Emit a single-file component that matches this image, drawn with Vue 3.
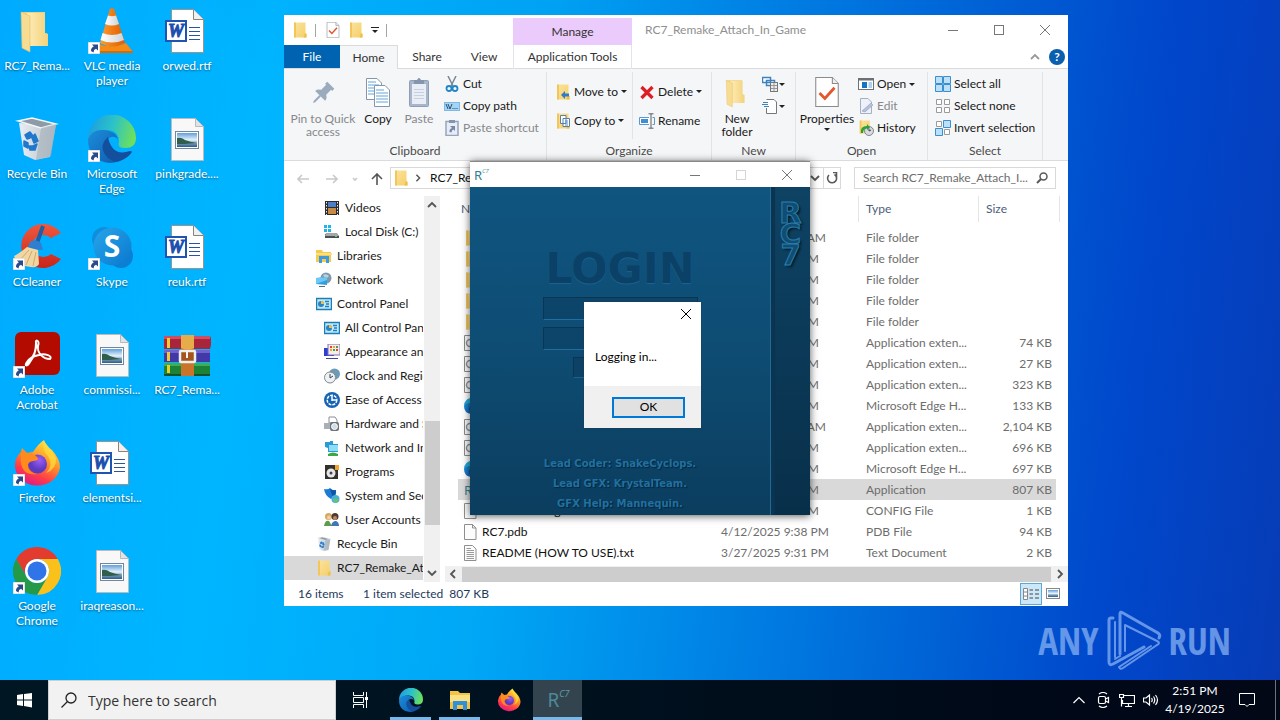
<script setup>
const shortcuts = [
  { label: 'RC7_Rema...', icon: 'd-folder' },
  { label: 'Recycle Bin', icon: 'd-bin' },
  { label: 'CCleaner', icon: 'd-ccleaner', link: true },
  { label: 'Adobe Acrobat', icon: 'd-acrobat', link: true },
  { label: 'Firefox', icon: 'd-firefox', link: true },
  { label: 'Google Chrome', icon: 'd-chrome', link: true },
  { label: 'VLC media player', icon: 'd-vlc', link: true },
  { label: 'Microsoft Edge', icon: 'd-edge', link: true },
  { label: 'Skype', icon: 'd-skype', link: true, letter: 'S' },
  { label: 'commissi...', icon: 'd-image' },
  { label: 'elementsi...', icon: 'd-word', letter: 'W' },
  { label: 'iraqreason...', icon: 'd-image' },
  { label: 'orwed.rtf', icon: 'd-word', letter: 'W' },
  { label: 'pinkgrade....', icon: 'd-image' },
  { label: 'reuk.rtf', icon: 'd-word', letter: 'W' },
  { label: 'RC7_Rema...', icon: 'd-rar' },
]

const tree = [
  { label: 'Videos', icon: 'n-video', deep: true },
  { label: 'Local Disk (C:)', icon: 'n-disk', deep: true },
  { label: 'Libraries', icon: 'n-lib' },
  { label: 'Network', icon: 'n-net' },
  { label: 'Control Panel', icon: 'n-panel' },
  { label: 'All Control Panel Items', icon: 'n-panel', deep: true },
  { label: 'Appearance and Personalization', icon: 'n-look', deep: true },
  { label: 'Clock and Region', icon: 'n-clock', deep: true },
  { label: 'Ease of Access', icon: 'n-ease', deep: true },
  { label: 'Hardware and Sound', icon: 'n-hard', deep: true },
  { label: 'Network and Internet', icon: 'n-inet', deep: true },
  { label: 'Programs', icon: 'n-prog', deep: true },
  { label: 'System and Security', icon: 'n-sec', deep: true },
  { label: 'User Accounts', icon: 'n-users', deep: true },
  { label: 'Recycle Bin', icon: 'd-bin' },
  { label: 'RC7_Remake_Attach_In_Game', icon: 'folder', current: true },
]

const dll = 'Application exten...'
const edge = 'Microsoft Edge H...'
const files = [
  { icon: 'folder', half: 'AM', long: true, type: 'File folder', size: '' },
  { icon: 'folder', half: 'PM', type: 'File folder', size: '' },
  { icon: 'folder', half: 'PM', type: 'File folder', size: '' },
  { icon: 'folder', half: 'PM', type: 'File folder', size: '' },
  { icon: 'folder', half: 'PM', type: 'File folder', size: '' },
  { icon: 'f-dll', half: 'PM', type: dll, size: '74 KB' },
  { icon: 'f-dll', half: 'PM', type: dll, size: '27 KB' },
  { icon: 'f-dll', half: 'PM', type: dll, size: '323 KB' },
  { icon: 'd-edge', half: 'PM', type: edge, size: '133 KB' },
  { icon: 'f-dll', half: 'AM', long: true, type: dll, size: '2,104 KB' },
  { icon: 'f-dll', half: 'PM', type: dll, size: '696 KB' },
  { icon: 'd-edge', half: 'PM', type: edge, size: '697 KB' },
  { icon: 'rc7', half: 'PM', type: 'Application', size: '807 KB', selected: true },
  { icon: 'f-page', name: 'RC7.exe.config', half: 'PM', type: 'CONFIG File', size: '1 KB' },
  { icon: 'f-page', name: 'RC7.pdb', date: '4/12/2025 9:38 PM', type: 'PDB File', size: '94 KB' },
  { icon: 'f-text', name: 'README (HOW TO USE).txt', date: '3/27/2025 9:31 PM', type: 'Text Document', size: '2 KB' },
]
</script>

<template>
  <div class="screen">
    <svg class="sprite" width="0" height="0" aria-hidden="true">
      <defs>
        <linearGradient id="gFold" x1="0" x2="1" y1="0" y2="1"><stop offset="0" stop-color="#fbe3a0" /><stop offset="1" stop-color="#f5cf66" /></linearGradient>
        <linearGradient id="gFold2" x1="0" x2="1"><stop offset="0" stop-color="#ffedb8" /><stop offset="1" stop-color="#f2d27c" /></linearGradient>
        <linearGradient id="gOr" x1="0" x2="1"><stop offset="0" stop-color="#f8a13a" /><stop offset=".5" stop-color="#f07a12" /><stop offset="1" stop-color="#d95f08" /></linearGradient>
        <linearGradient id="gWh" x1="0" x2="1"><stop offset="0" stop-color="#fff" /><stop offset="1" stop-color="#cfd3d6" /></linearGradient>
        <linearGradient id="gEdgeTop" x1="0" x2="1" y1=".3" y2=".5"><stop offset="0" stop-color="#1b9de2" /><stop offset=".5" stop-color="#2cc2c8" /><stop offset="1" stop-color="#6fe05a" /></linearGradient>
        <linearGradient id="gEdgeMid" x1="0" x2="1" y1="0" y2="1"><stop offset="0" stop-color="#1b8edb" /><stop offset="1" stop-color="#0f5cae" /></linearGradient>
        <linearGradient id="gFf" x1=".8" x2=".3" y1="0" y2="1"><stop offset="0" stop-color="#fff04a" /><stop offset=".4" stop-color="#ff9a26" /><stop offset=".75" stop-color="#ff3b4a" /><stop offset="1" stop-color="#e0188a" /></linearGradient>
        <radialGradient id="gFfC" cx=".6" cy=".3"><stop offset="0" stop-color="#a05cf5" /><stop offset="1" stop-color="#5b3bc0" /></radialGradient>
        <linearGradient id="gSky" x1="0" x2="1" y1="0" y2="1"><stop offset="0" stop-color="#27a6ea" /><stop offset="1" stop-color="#0a78cf" /></linearGradient>
        <linearGradient id="gCc" x1="0" x2="0" y1="0" y2="1"><stop offset="0" stop-color="#f0583c" /><stop offset="1" stop-color="#c9241b" /></linearGradient>
        <linearGradient id="gBin" x1="0" x2="1"><stop offset="0" stop-color="#e9eef2" /><stop offset="1" stop-color="#b4bec7" /></linearGradient>
        <linearGradient id="gPic" x1="0" x2="0" y1="0" y2="1"><stop offset="0" stop-color="#5fa0dc" /><stop offset=".5" stop-color="#e8f2fa" /><stop offset=".7" stop-color="#7fa6c4" /><stop offset="1" stop-color="#2c5a86" /></linearGradient>
      </defs>

      <symbol id="arrow" viewBox="0 0 12 12"><rect width="12" height="12" fill="#fff" stroke="#c8c8c8" /><path d="M4 2.5h6v6L8 6.800Q5.500 7.500 5.500 10.500L3 9Q2.800 5.800 5.800 4.500z" fill="#2a4a8c" /></symbol>

      <symbol id="d-folder" viewBox="0 0 48 48"><path d="M8 5H32V26L35 27V39H14z" fill="#f3d17b" /><path d="M14 6H32V26L35 27V39H16z" fill="url(#gFold2)" /><path d="M8 5L17 9V45L9 41z" fill="#f7dc94" stroke="#e3bd5f" stroke-width=".6" /></symbol>
      <symbol id="d-bin" viewBox="0 0 48 48"><path d="M6 8L43 10L37 42L22 45L11 40z" fill="url(#gBin)" /><path d="M5 6L19 3L43 9L28 13z" fill="#8e9ba6" stroke="#f4f7f9" stroke-width="1.500" /><path d="M28 13L43 9L38 41L23 45z" fill="#a5b0ba" opacity=".6" /><path d="M12 20L17 17L20 21L17 23L14 24zM22 19L25 26L21 28L19 23zM11 26L15 28V33L11 31zM16 31H20L24 29L22 35H17z" fill="#1f78cc" stroke="#1f78cc" stroke-width="1.500" stroke-linejoin="round" /></symbol>
      <symbol id="d-ccleaner" viewBox="0 0 48 48"><path d="M48 10A22 22 0 1 0 48 36L38 31A11 11 0 1 1 38 15z" fill="url(#gCc)" /><path d="M30 3L24 20" stroke="#1f5fa6" stroke-width="4" /><path d="M17 19Q22 15 28 20L30 27 14 26z" fill="#2f7fd0" /><path d="M14 24Q4 32 1 33Q4 42 12 43Q24 46 26 41L25 27z" fill="#f1d6a4" /><path d="M6 38L16 27M13 42L19 28M20 43L23 29" stroke="#d2a867" /></symbol>
      <symbol id="d-acrobat" viewBox="0 0 48 48"><rect x="2" y="1" width="45" height="43" rx="6" fill="#b30b00" /><path d="M14 33C20 28 24 18 23 12C22 8 27 9 25 15C24 22 30 28 37 28C40 25 32 22 26 24C20 25 16 28 14 31C11 35 14 36 17 31C21 26 23 18 23 12" fill="none" stroke="#fff" stroke-width="2" stroke-linejoin="round" /></symbol>
      <symbol id="d-firefox" viewBox="0 0 48 48"><path d="M31 1Q33 7 39 11Q47 20 47 28A22.500 20 0 1 1 2 25Q3 17 8 13L9 9L14 14L20 13Q25 5 31 1z" fill="url(#gFf)" /><circle cx="24.500" cy="25" r="9.500" fill="url(#gFfC)" /><path d="M9 10L14 14Q19 13 24 18Q28 21 20 22Q14 23 15 28Q17 34 24 35Q10 37 8 24Q7 16 9 10z" fill="#ff8a1e" /><path d="M31 2Q29 12 35 17Q41 27 33 34Q44 30 43 19Q39 12 31 2z" fill="#ffe03d" opacity=".7" /></symbol>
      <symbol id="d-chrome" viewBox="0 0 48 48"><path d="M24 12H44.800A24 24 0 0 0 3.200 12L13.600 30A12 12 0 0 1 24 12z" fill="#e33b2e" /><path d="M44.800 12A24 24 0 0 1 24 48L34.400 30A12 12 0 0 0 24 12z" fill="#fbc11b" /><path d="M3.200 12A24 24 0 0 0 24 48L34.400 30A12 12 0 0 1 13.600 30z" fill="#249a48" /><circle cx="24" cy="24" r="12" fill="#fff" /><circle cx="24" cy="24" r="9.500" fill="#2f74e8" /></symbol>
      <symbol id="d-vlc" viewBox="0 0 48 48"><path d="M11 37Q24 42 38 36L45 45H6z" fill="#f58a14" /><path d="M6 44H45V46H6z" fill="#d86a06" /><path d="M22 1.500H26L37 36Q24 43 12 36z" fill="url(#gOr)" /><path d="M20 8.500Q24 10 28 8.500L31 17Q24 20 17 17z" fill="url(#gWh)" /><path d="M14.500 26Q24 30 33.500 26L36 33Q24 38 12.500 33z" fill="url(#gWh)" /></symbol>
      <symbol id="d-edge" viewBox="0 0 48 48"><path d="M0 24A24 24 0 0 1 48 23Q48 33 37 33Q29 33 31 27Q31 15 19 15Q6 15 0 24z" fill="url(#gEdgeTop)" /><path d="M0 24Q4 14 16 15Q29 16 30 25Q28 21 23 22Q16 24 17 34Q20 45 31 46Q27 48 22 48Q0 46 0 24z" fill="url(#gEdgeMid)" /><path d="M20 22Q9 32 20 43Q26 48 32 46Q40 43 44 37Q44 36 42 36Q24 42 20 22z" fill="#134f9c" /></symbol>
      <symbol id="d-skype" viewBox="0 0 48 48"><circle cx="16" cy="16" r="12" fill="#0f8ede" /><circle cx="33" cy="33" r="12" fill="#0b7fd4" /><circle cx="24.500" cy="23.500" r="19" fill="url(#gSky)" /></symbol>
      <symbol id="d-word" viewBox="0 0 48 48"><path d="M8.500 2.500H30.500L40.500 12.500V45.500H8.500z" fill="#fff" stroke="#9b938c" /><path d="M30.500 2.500V12.500H40.500" fill="#f0f0f0" stroke="#8a827b" /><path d="M26 20.500H37M26 24.500H37M26 28.500H37M26 32.500H37" stroke="#2b579a" /><rect x="3" y="14" width="20" height="20" fill="#fff" stroke="#1f55b0" stroke-width="2" /></symbol>
      <symbol id="d-image" viewBox="0 0 48 48"><path d="M8.500 3.500H32.500L40.500 11.500V45.500H8.500z" fill="#f8f8f8" stroke="#bdbab7" /><path d="M32.500 3.500V11.500H40.500z" fill="#e0e4e8" stroke="#b9b9b9" /><rect x="12.500" y="16.500" width="23" height="17" fill="#fff" stroke="#6f8799" /><rect x="14" y="18" width="20" height="14" fill="url(#gPic)" /><path d="M14 23Q18 22 22 25Q27 27 34 28L22 29L14 29z" fill="#2f5f4c" /></symbol>
      <symbol id="d-rar" viewBox="0 0 48 48"><path d="M1 5H47L49 10L47 18H1z" fill="#a8253c" /><path d="M1 5H47V8H1z" fill="#d04d62" /><path d="M1 19H47V31H1z" fill="#4238a8" /><path d="M1 19H47V22H1z" fill="#6d64cf" /><path d="M1 32H47V43H1z" fill="#1b8236" /><path d="M1 32H47V35H1z" fill="#41ad52" /><path d="M1 43H47V45H1z" fill="#12512a" /><path d="M4 7H7V17H4zM4 21H7V30H4zM4 34H7V42H4z" fill="#f1cb2e" /><path d="M18 4H31V45H18z" fill="#c9742a" /><path d="M18 4H31V17Q25 20 18 17z" fill="#e8ab4a" /><rect x="17" y="20" width="15" height="11" rx="1" fill="#a5541c" stroke="#eceff2" stroke-width="2.500" /><path d="M24 20V27" stroke="#f4f4f4" stroke-width="2" /></symbol>

      <symbol id="folder" viewBox="0 0 16 16"><path d="M2 .5H13.500V11L14.500 12V15.500H2z" fill="url(#gFold)" /><path d="M2 .5H4V15.500H2z" fill="#f1c75c" /><path d="M13 11L14.500 12V15.500H11.500z" fill="#eebf4a" /></symbol>
      <symbol id="f-dll" viewBox="0 0 16 16"><path d="M.5.5H12L15.500 4V15.500H.5z" fill="#fafafa" stroke="#8a8a8a" /><circle cx="6" cy="8" r="3.500" fill="none" stroke="#8c9298" stroke-width="1.500" /><circle cx="10" cy="11" r="2" fill="#b6bec6" /></symbol>
      <symbol id="f-page" viewBox="0 0 16 16"><path d="M.5.5H8.500L12 4V15.500H.5z" fill="#fcfcfc" stroke="#8f8f8f" /><path d="M8.500.5V4H12" fill="none" stroke="#8f8f8f" /></symbol>
      <symbol id="f-text" viewBox="0 0 16 16"><path d="M.5.5H8.500L12 4V15.500H.5z" fill="#fcfcfc" stroke="#8f8f8f" /><path d="M2.500 5.500H10M2.500 7.500H10M2.500 9.500H10M2.500 11.500H10M2.500 13.500H10M2.500 3.500H7" stroke="#9a9a9a" /></symbol>
      <symbol id="check-doc" viewBox="0 0 22 28"><path d="M.5.5H16L21.500 6V27.500H.5z" fill="#fff" stroke="#8b8b8b" /><path d="M16 .5V6H21.500" fill="#eee" stroke="#8b8b8b" /><path d="M4 15L9 20L18 10" fill="none" stroke="#e1582c" stroke-width="2.600" /></symbol>

      <symbol id="n-video" viewBox="0 0 16 16"><rect x="1" y="1" width="14" height="14" fill="#2b2b30" /><rect x="4" y="2" width="8" height="5" fill="#4d7fc4" /><rect x="4" y="8" width="8" height="6" fill="#c58b45" /><path d="M2.500 2V15M13.500 2V15" stroke="#e8e8e8" stroke-dasharray="1.500 1.500" /></symbol>
      <symbol id="n-disk" viewBox="0 0 16 16"><path d="M0 1H3V4H0zM4 1H7V4H4zM0 5H3V8H0zM4 5H7V8H4z" fill="#23b3e8" /><path d="M1 10H13L15 12V14H1z" fill="#4a4e52" /><path d="M2 9H13L15 12H1z" fill="#a3a8ad" /><path d="M11 12H13V13H11z" fill="#3fe05a" /></symbol>
      <symbol id="n-lib" viewBox="0 0 16 16"><path d="M0 2H6L7 4H15V14H0z" fill="#f6ca4b" /><path d="M0 5H16V7H0z" fill="#fbe08a" /><path d="M3 8H13V15H10V11H6V15H3z" fill="#3c9ae0" /></symbol>
      <symbol id="n-net" viewBox="0 0 16 16"><circle cx="10" cy="6" r="5.500" fill="#7e99ab" /><path d="M7 3Q10 1 13 4L10 7z" fill="#bcd3de" /><path d="M0 6L11 5V13L0 12z" fill="#2f9fe0" /><path d="M0 6L11 5V8L0 12z" fill="#6cc8f5" /><path d="M3 14H9V15H3z" fill="#50707f" /></symbol>
      <symbol id="n-panel" viewBox="0 0 16 16"><rect x=".5" y="2.500" width="15" height="11" fill="#bfe8fb" stroke="#1e7fb8" stroke-width="1.500" /><circle cx="5" cy="8" r="3" fill="#2a83c2" /><path d="M5 8V5A3 3 0 0 1 8 8z" fill="#f3c13a" /><path d="M9 5.500H13M10 8H13M9 10.500H13" stroke="#2282b8" stroke-width="1.500" /></symbol>
      <symbol id="n-look" viewBox="0 0 16 16"><rect x="0" y="4" width="10" height="8" fill="#2b3fd0" /><rect x="4" y="0" width="12" height="11" fill="#f3efe8" stroke="#8d6bb0" /><path d="M6 2H8V4H6zM12 5H14V7H12z" fill="#e0463c" /><path d="M9 2H11V4H9zM6 5H8V7H6z" fill="#f0a52e" /><path d="M12 2H14V4H12zM9 5H11V7H9z" fill="#4aa047" /><path d="M2 14H14V15H2z" fill="#3a4896" /></symbol>
      <symbol id="n-clock" viewBox="0 0 16 16"><circle cx="10.500" cy="6" r="5.500" fill="#6b9bb5" /><circle cx="6" cy="9.500" r="5.500" fill="#eef2f4" stroke="#808a90" /><path d="M6 6V10L9 8" fill="none" stroke="#3c4750" /></symbol>
      <symbol id="n-ease" viewBox="0 0 16 16"><circle cx="8" cy="8" r="8" fill="#1565b4" /><circle cx="8" cy="8" r="4.800" fill="none" stroke="#fff" stroke-width="1.500" stroke-dasharray="3 1" /><path d="M8 4V9M8 8H12" stroke="#fff" stroke-width="1.500" /></symbol>
      <symbol id="n-hard" viewBox="0 0 16 16"><path d="M5 1H11L13 4V7H5z" fill="#fff" stroke="#8a8f94" /><path d="M0 7H14V13H0z" fill="#a9afb4" /><rect x="6" y="6" width="9" height="9" rx="2" fill="#6d7379" /><circle cx="10.500" cy="10.500" r="3" fill="#cfe0ea" stroke="#fff" /></symbol>
      <symbol id="n-inet" viewBox="0 0 16 16"><path d="M1 2H6V1H9V4H14V12H4V8L1 7z" fill="#2a9bd4" /><rect x="5" y="5" width="9" height="6" fill="#8fdcf7" /><path d="M4 14Q9 11 14 14V16H4z" fill="#39a849" /></symbol>
      <symbol id="n-prog" viewBox="0 0 16 16"><rect x="1" y="1" width="13" height="14" fill="#33312e" /><path d="M11 1H15V6H11z" fill="#f0a62a" /><circle cx="7" cy="9" r="4.500" fill="#e6e6e6" /><circle cx="7" cy="9" r="1.500" fill="#444" /></symbol>
      <symbol id="n-sec" viewBox="0 0 16 16"><path d="M0 1Q4 2 6 0Q9 3 12 2Q13 9 7 11Q1 8 0 1z" fill="#1b7bd2" /><path d="M6 1Q9 3 12 2Q12 7 9 10z" fill="#0d56a5" /><circle cx="11.500" cy="11" r="4" fill="#47b0d9" /><path d="M9 12Q12 9 15 12L12 15z" fill="#6fc26c" /></symbol>
      <symbol id="n-users" viewBox="0 0 16 16"><circle cx="4.500" cy="4.500" r="3.500" fill="#d7a95e" /><circle cx="11" cy="4.500" r="3.500" fill="#4e3b2e" /><circle cx="5" cy="5.500" r="2" fill="#f3cfa6" /><circle cx="11" cy="6" r="2" fill="#b98862" /><path d="M0 14Q1 8 5 9L8 14z" fill="#5c9d4b" /><path d="M7 14Q8 9 12 9Q15 10 15 14z" fill="#3d77b5" /></symbol>

      <symbol id="r-pin" viewBox="0 0 32 32"><g transform="rotate(45 16 16)" fill="#9aabbd"><path d="M11 5H21V8H19.500V15Q23 17 23 20H9Q9 17 12.500 15V8H11z" /><path d="M15 20H17V28L16 30L15 28z" /></g></symbol>
      <symbol id="r-copy" viewBox="0 0 32 32"><g fill="#fff" stroke="#8497a9"><path d="M4.500 1.500H15L19.500 6V22.500H4.500z" /><path d="M12.500 8.500H23L27.500 13V29.500H12.500z" /></g><path d="M6 5H14M6 8H17M6 11H12M6 14H12M6 17H12M14 13H22M14 16H26M14 19H26M14 22H26M14 25H26" stroke="#62a5dc" /></symbol>
      <symbol id="r-paste" viewBox="0 0 32 32"><rect x="6.500" y="3.500" width="19" height="26" rx="1" fill="#a9b6ca" stroke="#8e9fba" /><rect x="9" y="7" width="14" height="20" fill="#e9eef6" /><path d="M11 5V3H14Q16 -1 18 3H21V7H11z" fill="#8495ae" /><path d="M11 12.500H21M11 15.500H21M11 18.500H21M11 21.500H21" stroke="#c5d0e2" /></symbol>
      <symbol id="r-cut" viewBox="0 0 16 16"><path d="M4 0L9 10M12 0L7 10" stroke="#7b8792" stroke-width="1.500" /><circle cx="5" cy="12.500" r="2.500" fill="none" stroke="#2185c7" stroke-width="1.800" /><circle cx="11" cy="12.500" r="2.500" fill="none" stroke="#2185c7" stroke-width="1.800" /></symbol>
      <symbol id="r-path" viewBox="0 0 16 16"><rect x=".5" y="4.500" width="15" height="8" fill="#a6d4f5" stroke="#7eb8e4" /><path d="M2 6L4 11M4 6L6 11L8 6" stroke="#234f75" fill="none" /><path d="M8.500 10.500H14" stroke="#234f75" stroke-dasharray="1 1" /></symbol>
      <symbol id="r-short" viewBox="0 0 16 16"><rect x="2" y="1.500" width="12" height="14" fill="#e8edf5" stroke="#95a5bf" stroke-width="1.500" /><path d="M5 0H11V3H5z" fill="#8495ae" /><path d="M6 6H11V11L9.500 9.500Q7.500 10 7.500 12.500L5.500 12Q5 9 8 8z" fill="#7488ab" /></symbol>
      <symbol id="r-move" viewBox="0 0 16 16"><use href="#folder" width="16" height="16" /><path d="M6 11L10 7V9.500H14V12.500H10V15z" fill="#2f7cc4" /></symbol>
      <symbol id="r-copyto" viewBox="0 0 16 16"><use href="#folder" width="16" height="16" /><path d="M5.500 2.500H11V10.500H5.500zM8 5.500H14.500V13.500H8z" fill="#fff" stroke="#5b7fa5" /><path d="M10 8H13M10 10H13M10 12H13" stroke="#4a90cf" /></symbol>
      <symbol id="r-del" viewBox="0 0 16 16"><path d="M2.500 3L13.500 14M13.500 3L2.500 14" stroke="#db1f26" stroke-width="3.200" /></symbol>
      <symbol id="r-ren" viewBox="0 0 16 16"><path d="M10 4.500H.5V11.500H10" fill="#fff" stroke="#5a98cf" /><path d="M2 6H9V10H2z" fill="#3e8fd4" /><path d="M12 1V15M9.500 .800H14.500M9.500 15.200H14.500" stroke="#5c5c5c" /><path d="M13.500 4.500H15.500V11.500H13.500" fill="none" stroke="#5a98cf" /></symbol>
      <symbol id="r-item" viewBox="0 0 16 16"><path d="M.5 1.500H8.500V6.500H.5zM4.500 4.500H12.500V9.500H4.500z" fill="#fff" stroke="#3d83bf" stroke-width="1.500" /><rect x="8.500" y="6.500" width="7" height="9" fill="#eee" stroke="#777" /><path d="M9 9.500H15M9 12.500H15M12 7V15" stroke="#999" /></symbol>
      <symbol id="r-easy" viewBox="0 0 16 16"><path d="M4.500 1.500H12L14.500 4V15.500H4.500V10" fill="#fff" stroke="#777" /><path d="M0 6.500H6M1 4.500H6M2 8.500H7" stroke="#3d83bf" /></symbol>
      <symbol id="r-open" viewBox="0 0 16 16"><rect x=".5" y="2.500" width="15" height="11" fill="#fff" stroke="#6b7177" /><path d="M0 3.500H16" stroke="#6b7177" stroke-width="2" /><rect x="4" y="6" width="5" height="6" fill="#1673c4" /><path d="M10.500 7H14M10.500 9H14M10.500 11H14" stroke="#58a0da" /></symbol>
      <symbol id="r-edit" viewBox="0 0 16 16"><path d="M2.500.5H10L13.500 4V15.500H2.500z" fill="#eef2f8" stroke="#a3b0c6" /><path d="M4 13L13 5L15 7L7 14z" fill="#b4c1d8" stroke="#90a1bf" stroke-width=".6" /></symbol>
      <symbol id="r-hist" viewBox="0 0 16 16"><use href="#folder" width="14" height="14" /><circle cx="11" cy="11" r="4.500" fill="#d6dade" stroke="#80878d" /><path d="M11 8.500V11L13 10" fill="none" stroke="#444" /><path d="M3 13Q2 6 9 6V4L12 7.500L9 10V8.500Q5 8.500 5 13z" fill="#27a23a" /></symbol>
      <symbol id="r-all" viewBox="0 0 16 16"><path d="M.5.5H7.500V7.500H.5zM8.500.5H15.500V7.500H8.500zM.5 8.500H7.500V15.500H.5zM8.500 8.500H15.500V15.500H8.500z" fill="#bde0f8" stroke="#3990cf" /></symbol>
      <symbol id="r-none" viewBox="0 0 16 16"><path d="M1.500 1.500H6.500V6.500H1.500zM9.500 1.500H14.500V6.500H9.500zM1.500 9.500H6.500V14.500H1.500zM9.500 9.500H14.500V14.500H9.500z" fill="#fff" stroke="#9a9a9a" /></symbol>
      <symbol id="r-inv" viewBox="0 0 16 16"><path d="M1.500 1.500H6.500V6.500H1.500zM9.500 9.500H14.500V14.500H9.500z" fill="#fff" stroke="#9a9a9a" /><path d="M8.500.5H15.500V7.500H8.500zM.5 8.500H7.500V15.500H.5z" fill="#bde0f8" stroke="#3990cf" /></symbol>

      <symbol id="w-min" viewBox="0 0 12 12"><path d="M1 6.500H11" stroke="currentColor" /></symbol>
      <symbol id="w-max" viewBox="0 0 12 12"><rect x="1.500" y="1.500" width="9" height="9" fill="none" stroke="currentColor" /></symbol>
      <symbol id="w-close" viewBox="0 0 12 12"><path d="M1 1L11 11M11 1L1 11" stroke="currentColor" fill="none" /></symbol>
      <symbol id="c-up" viewBox="0 0 10 10"><path d="M1 7L5 3L9 7" fill="none" stroke="currentColor" stroke-width="1.800" /></symbol>
      <symbol id="c-down" viewBox="0 0 10 10"><path d="M1 3L5 7L9 3" fill="none" stroke="currentColor" stroke-width="1.800" /></symbol>
      <symbol id="c-left" viewBox="0 0 10 10"><path d="M7 1L3 5L7 9" fill="none" stroke="currentColor" stroke-width="1.800" /></symbol>
      <symbol id="c-right" viewBox="0 0 10 10"><path d="M3 1L7 5L3 9" fill="none" stroke="currentColor" stroke-width="1.800" /></symbol>
    </svg>

    <main class="desktop">
      <ul class="shortcuts">
        <li v-for="(s, i) in shortcuts" :key="i" class="shortcut">
          <span class="pic">
            <svg class="i48"><use :href="'#' + s.icon" /></svg>
            <span v-if="s.letter" class="letter" :class="'letter-' + s.letter">{{ s.letter }}</span>
            <svg v-if="s.link" class="badge"><use href="#arrow" /></svg>
          </span>
          <span class="caption">{{ s.label }}</span>
        </li>
      </ul>

      <div class="watermark" aria-label="ANY RUN">
        <span>ANY</span>
        <svg class="wm-logo" viewBox="0 0 56 62" fill="none" stroke="currentColor" stroke-width="3" stroke-linejoin="round" stroke-linecap="round">
          <path d="M7 8H5Q3 8 3 10V52Q3 56 7 54L38 37M14 44V4Q14 1 17 3L52 23Q55 25 53 28" />
          <path d="M9 12V47M9 49L14 46M19 15L51 31Q55 33 51 35L17 58Q14 60 13 57L45 36M19 41V15" stroke-width="2" />
        </svg>
        <span>RUN</span>
      </div>

      <section class="explorer" aria-label="RC7_Remake_Attach_In_Game">
        <header class="titlebar">
          <div class="quick">
            <svg class="i16"><use href="#folder" /></svg><i class="bar"></i>
            <svg class="i16"><use href="#check-doc" /></svg>
            <svg class="i16"><use href="#folder" /></svg>
            <svg class="qcaret" viewBox="0 0 8 8"><path d="M0 1.500H8" stroke="#222" /><path d="M1 4H7L4 7z" fill="#222" /></svg><i class="bar"></i>
          </div>
          <div class="manage">Manage</div>
          <h1 class="title">RC7_Remake_Attach_In_Game</h1>
          <div class="winbtns">
            <button aria-label="Minimize"><svg class="i12"><use href="#w-min" /></svg></button>
            <button aria-label="Maximize"><svg class="i12"><use href="#w-max" /></svg></button>
            <button aria-label="Close"><svg class="i12"><use href="#w-close" /></svg></button>
          </div>
        </header>

        <nav class="tabs">
          <button class="tab file">File</button>
          <button class="tab home">Home</button>
          <button class="tab">Share</button>
          <button class="tab view-tab">View</button>
          <button class="tab tools">Application Tools</button>
          <span class="tabs-end">
            <svg class="i10"><use href="#c-up" /></svg>
            <button class="help" aria-label="Help">?</button>
          </span>
        </nav>

        <div class="ribbon">
          <div class="group g-clip">
            <div class="tools-row">
              <button class="big dim w-pin"><svg class="i32"><use href="#r-pin" /></svg><span>Pin to Quick<br>access</span></button>
              <button class="big w-copy"><svg class="i32"><use href="#r-copy" /></svg><span>Copy</span></button>
              <button class="big dim w-paste"><svg class="i32"><use href="#r-paste" /></svg><span>Paste</span></button>
              <div class="stack">
                <button class="small"><svg class="i16"><use href="#r-cut" /></svg>Cut</button>
                <button class="small"><svg class="i16"><use href="#r-path" /></svg>Copy path</button>
                <button class="small dim"><svg class="i16"><use href="#r-short" /></svg>Paste shortcut</button>
              </div>
            </div>
            <div class="gname">Clipboard</div>
          </div>
          <div class="group g-org">
            <div class="tools-row">
              <div class="stack loose first">
                <button class="small"><svg class="i16"><use href="#r-move" /></svg>Move to<i class="caret"></i></button>
                <button class="small"><svg class="i16"><use href="#r-copyto" /></svg>Copy to<i class="caret"></i></button>
              </div>
              <div class="stack loose second">
                <button class="small"><svg class="i16"><use href="#r-del" /></svg>Delete<i class="caret"></i></button>
                <button class="small"><svg class="i16"><use href="#r-ren" /></svg>Rename</button>
              </div>
            </div>
            <div class="gname">Organize</div>
          </div>
          <div class="group g-new">
            <div class="tools-row">
              <button class="big w-new"><svg class="i32"><use href="#d-folder" /></svg><span>New<br>folder</span></button>
              <div class="stack">
                <button class="small" aria-label="New item"><svg class="i16"><use href="#r-item" /></svg><i class="caret tight"></i></button>
                <button class="small" aria-label="Easy access"><svg class="i16"><use href="#r-easy" /></svg><i class="caret tight"></i></button>
              </div>
            </div>
            <div class="gname">New</div>
          </div>
          <div class="group g-open">
            <div class="tools-row">
              <button class="big w-prop"><svg class="i32"><use href="#check-doc" x="3" width="26" height="30" /></svg><span>Properties</span><i class="caret"></i></button>
              <div class="stack">
                <button class="small"><svg class="i16"><use href="#r-open" /></svg>Open<i class="caret"></i></button>
                <button class="small dim"><svg class="i16"><use href="#r-edit" /></svg>Edit</button>
                <button class="small"><svg class="i16"><use href="#r-hist" /></svg>History</button>
              </div>
            </div>
            <div class="gname">Open</div>
          </div>
          <div class="group g-sel">
            <div class="tools-row">
              <div class="stack">
                <button class="small"><svg class="i16"><use href="#r-all" /></svg>Select all</button>
                <button class="small"><svg class="i16"><use href="#r-none" /></svg>Select none</button>
                <button class="small"><svg class="i16"><use href="#r-inv" /></svg>Invert selection</button>
              </div>
            </div>
            <div class="gname">Select</div>
          </div>
        </div>

        <div class="address">
          <div class="arrows">
            <svg class="i12 off" viewBox="0 0 12 12"><path d="M12 6H1M5 2L1 6L5 10" /></svg>
            <svg class="i12 off" viewBox="0 0 12 12"><path d="M0 6H11M7 2L11 6L7 10" /></svg>
            <svg class="i6 off" viewBox="0 0 6 6"><path d="M1 2L3 4L5 2" /></svg>
            <svg class="i12 up" viewBox="0 0 12 12"><path d="M6 12V1M1 6L6 1L11 6" /></svg>
          </div>
          <div class="crumbs">
            <svg class="i16"><use href="#folder" /></svg>
            <svg class="i8"><use href="#c-right" /></svg>
            <span class="crumb">RC7_Remake_Attach_In_Game</span>
            <svg class="i10"><use href="#c-down" /></svg>
          </div>
          <button class="refresh" aria-label="Refresh"><svg class="i12" viewBox="0 0 12 12"><path d="M8.500 2.500A4.500 4.500 0 1 1 3 3M7 .5H10.500V5" fill="none" stroke="#5a5a5a" stroke-width="1.600" /></svg></button>
          <div class="search">
            <input type="text" placeholder="Search RC7_Remake_Attach_I..." aria-label="Search folder">
            <svg class="i12" viewBox="0 0 12 12"><circle cx="7.500" cy="4.500" r="3.500" fill="none" stroke="#5a5a5a" stroke-width="1.500" /><path d="M5 7L1 11" stroke="#5a5a5a" stroke-width="2" /></svg>
          </div>
        </div>

        <div class="panes">
          <ul class="tree">
            <li v-for="(n, i) in tree" :key="i" :class="{ deep: n.deep, current: n.current }">
              <svg class="i16"><use :href="'#' + n.icon" /></svg>{{ n.label }}
            </li>
          </ul>
          <div class="vscroll">
            <svg class="i10"><use href="#c-up" /></svg>
            <span class="vthumb"></span>
            <svg class="i10"><use href="#c-down" /></svg>
          </div>
          <div class="listing">
            <table>
              <colgroup><col class="c-name"><col class="c-date"><col class="c-type"><col class="c-size"></colgroup>
              <thead><tr><th>Name</th><th></th><th>Type</th><th>Size</th></tr></thead>
              <tbody>
                <tr v-for="(f, i) in files" :key="i" :class="{ selected: f.selected }">
                  <td>
                    <span class="fname">
                      <span v-if="f.icon === 'rc7'" class="rc7">R<sup>C7</sup></span>
                      <svg v-else class="i16"><use :href="'#' + f.icon" /></svg>{{ f.name }}
                    </span>
                  </td>
                  <td :class="{ tail: f.half, long: f.long }">{{ f.date || f.half }}</td>
                  <td>{{ f.type }}</td>
                  <td>{{ f.size }}</td>
                </tr>
              </tbody>
            </table>
            <div class="hscroll">
              <svg class="i10"><use href="#c-left" /></svg>
              <span class="hthumb"></span>
              <svg class="i10"><use href="#c-right" /></svg>
            </div>
          </div>
        </div>

        <footer class="status">
          <span class="count">16 items</span>
          <span>1 item selected</span>
          <span class="bytes">807 KB</span>
          <button class="view on" aria-label="Details view"><svg viewBox="0 0 16 14"><path d="M.5 1.500H4.500V12.500H.5zM.5 5H4.500M.5 9H4.500" fill="#fff" stroke="#888" /><path d="M6.500 3H10M12 3H16M6.500 7H10M12 7H16M6.500 11H10M12 11H16" stroke="#444" /></svg></button>
          <button class="view" aria-label="Large icons view"><svg viewBox="0 0 16 14"><rect x="1.500" y="1.500" width="13" height="10" fill="#fff" stroke="#888" /><rect x="3" y="3" width="10" height="7" fill="url(#gPic)" /></svg></button>
        </footer>
      </section>

      <section class="login" aria-label="RC7 login">
        <header class="login-bar">
          <span class="rc7">R<sup>C7</sup></span>
          <div class="winbtns">
            <button aria-label="Minimize"><svg class="i12"><use href="#w-min" /></svg></button>
            <button class="faint" aria-label="Maximize" disabled><svg class="i12"><use href="#w-max" /></svg></button>
            <button aria-label="Close"><svg class="i12"><use href="#w-close" /></svg></button>
          </div>
        </header>
        <div class="login-body">
          <form class="form" @submit.prevent>
            <h2>LOGIN</h2>
            <input type="text" aria-label="Username">
            <input type="password" aria-label="Password">
            <button class="go" aria-label="Log in"></button>
            <div class="credits">
              <p>Lead Coder: SnakeCyclops.</p>
              <p>Lead GFX: KrystalTeam.</p>
              <p>GFX Help: Mannequin.</p>
            </div>
          </form>
          <aside class="brand"><span>R</span><span>C</span><span>7</span></aside>
        </div>
      </section>

      <section class="msg" role="dialog" aria-label="Message">
        <button class="msg-close" aria-label="Close"><svg class="i12"><use href="#w-close" /></svg></button>
        <p>Logging in...</p>
        <div class="msg-foot"><button>OK</button></div>
      </section>
    </main>

    <footer class="taskbar">
      <button class="tb" aria-label="Start"><svg class="i16" viewBox="0 0 16 16"><path d="M1 3L7 2V7.500H1zM8 2L16 1V7.500H8zM1 8.500H7V14L1 13zM8 8.500H16V15.500L8 14z" fill="#fff" /></svg></button>
      <label class="tb-search">
        <svg class="i16" viewBox="0 0 16 16"><circle cx="10" cy="6" r="5" fill="none" stroke="#222" stroke-width="1.300" /><path d="M6.500 9.500L.5 15.500" stroke="#222" stroke-width="1.300" /></svg>
        <input type="text" placeholder="Type here to search" aria-label="Type here to search">
      </label>
      <button class="tb task" aria-label="Task view"><svg class="i16" viewBox="0 0 16 16" fill="none" stroke="#fff"><path d="M.5 0V3.500H10.500V0M.5 16V12.500H10.500V16M.5 5.500H10.500V10.500H.5zM13.500 0V16" /><path d="M12 6.500H15" stroke-width="3" /></svg></button>
      <button class="tb app" aria-label="Microsoft Edge"><svg class="i24"><use href="#d-edge" /></svg></button>
      <button class="tb app" aria-label="File Explorer"><svg class="i24" viewBox="0 0 24 24"><path d="M2 3H10L12 5H22V21H2z" fill="#f5c344" /><path d="M2 7H22V14H2z" fill="#fbdf83" /><path d="M5 13H19V22H15V17H9V22H5z" fill="#2f8fdb" /></svg></button>
      <button class="tb" aria-label="Firefox"><svg class="i24"><use href="#d-firefox" /></svg></button>
      <button class="tb app active" aria-label="RC7"><span class="rc7 large">R<sup>C7</sup></span></button>
      <div class="tray">
        <svg class="i16" viewBox="0 0 16 16"><path d="M2.500 11L8 5.500L13.500 11" /></svg>
        <svg class="i16" viewBox="0 0 16 16"><rect x="3.500" y="4.500" width="7" height="7" rx="1.500" /><path d="M10.500 7L13.500 5.500V10.500L10.500 9M4 2Q8-1 12 2M4 14Q8 17 12 14" /></svg>
        <svg class="i16" viewBox="0 0 16 16"><path d="M4.500 3.500H15.500V11.500H3.500V8M9.500 11.500V14.500M6 14.500H13M.5 2.500H4.500V5.500H.5zM2.500 5.500V14.500" /></svg>
        <svg class="i16" viewBox="0 0 16 16"><path d="M.5 6H3L6.500 3V13L3 10H.5zM8.500 6Q10 8 8.500 10M10.500 4.500Q13 8 10.500 11.500M12.500 3Q16.500 8 12.500 13" /></svg>
      </div>
      <div class="clock"><span>2:51 PM</span><span>4/19/2025</span></div>
      <button class="tb note" aria-label="Notifications"><svg class="i16" viewBox="0 0 16 16"><path d="M.5 1.500H15.500V12.500H10L8 14.500L6 12.500H.5z" fill="none" stroke="#fff" /></svg></button>
      <span class="peek"></span>
    </footer>
  </div>
</template>

<style>
body { overflow: hidden; }
</style>

<style scoped>
* { box-sizing: border-box; }
.screen {
  min-height: 100vh; display: flex; flex-direction: column;
  font-family: Lato, "Open Sans", sans-serif; font-size: 12px; line-height: 16px; color: #1a1a1a;
  background:
    linear-gradient(to bottom left, rgba(0, 60, 200, .16), transparent 45%),
    linear-gradient(97deg, #00abff 0%, #00b5ff 20%, #00a8f6 40%, #0085e6 57%, #0060d4 75%, #0048cc 86%, #073bb4 100%);
}
.sprite { position: absolute; }
ul { list-style: none; margin: 0; padding: 0; }
h1, h2, p { margin: 0; }
button { font: inherit; color: inherit; background: none; border: 0; padding: 0; white-space: nowrap; }
input { font: inherit; border: 0; outline: 0; background: none; padding: 0; min-width: 0; }
svg { flex: none; display: block; }
.i48 { width: 48px; height: 48px; }
.i32 { width: 32px; height: 32px; }
.i24 { width: 24px; height: 24px; }
.i16 { width: 16px; height: 16px; }
.i12 { width: 12px; height: 12px; }
.i10 { width: 10px; height: 10px; }
.i8 { width: 8px; height: 8px; }
.i6 { width: 6px; height: 6px; }
.rc7 { width: 16px; flex: none; display: flex; align-items: flex-end; font: 13px/16px "Noto Sans", sans-serif; color: #2e7f93; }
.rc7 sup { font-size: 6px; line-height: 8px; font-style: italic; align-self: flex-start; color: #5c9aa8; }
.rc7.large { width: 20px; font-size: 19px; line-height: 24px; color: #4c8a99; }
.rc7.large sup { font-size: 9px; line-height: 12px; }

.desktop { flex: 1; position: relative; }
.shortcuts { display: grid; grid-template-rows: repeat(6, 108px); grid-auto-columns: 75px; grid-auto-flow: column; width: 225px; }
.shortcut { display: flex; flex-direction: column; align-items: center; gap: 3px; padding: 7px 1px 0 0; }
.pic { position: relative; }
.badge { position: absolute; left: 0; bottom: 1px; width: 12px; height: 12px; }
.letter { position: absolute; text-align: center; }
.letter-S { inset: 2px 0 auto; color: #fff; font: 700 30px/42px "Open Sans", sans-serif; }
.letter-W { left: 2px; top: 13px; width: 22px; color: #1c4fae; font: italic 700 18px/22px "Liberation Serif", serif; -webkit-text-stroke: 1px #1c4fae; }
.caption { max-width: 74px; color: #fff; line-height: 15px; text-align: center; text-shadow: 0 1px 2px rgba(0, 0, 0, .5); }

.watermark { position: absolute; right: 49px; bottom: 8px; display: flex; align-items: center; gap: 7px; color: #7eaaf0; opacity: .8; font: 37px/60px "Open Sans Condensed", "Roboto Condensed", sans-serif; }
.wm-logo { width: 56px; height: 62px; }

.explorer { position: absolute; left: 284px; top: 15px; width: 784px; background: #fff; }
.titlebar { display: flex; height: 30px; align-items: center; }
.quick { width: 229px; display: flex; align-items: center; gap: 7px; padding-left: 8px; }
.bar { width: 1px; height: 13px; background: #a5a5a5; margin-right: 2px; }
.qcaret { width: 8px; height: 8px; }
.manage { width: 119px; height: 27px; align-self: flex-end; background: #ebcbfb; text-align: center; line-height: 28px; color: #333; }
.title { flex: 1; padding-left: 13px; font-size: 12px; font-weight: 400; color: #8f8f8f; }
.winbtns { display: flex; color: #777; }
.winbtns button { width: 46px; height: 28px; display: grid; place-items: center; }
.tabs { display: flex; height: 24px; border-bottom: 1px solid #dadbdc; }
.tab { width: 58px; height: 24px; text-align: center; color: #333; }
.tab.file { width: 56px; height: 23px; background: #0063b1; color: #fff; }
.tab.home { background: #f5f6f7; border: 1px solid #dadbdc; border-width: 1px 1px 0 0; }
.tab.view-tab { width: 56px; }
.tab.tools { width: 119px; margin-left: 1px; border: 1px solid #e6e1ea; border-width: 0 1px; }
.tabs-end { margin-left: auto; display: flex; align-items: center; gap: 9px; padding-right: 3px; color: #999; }
.help { width: 16px; height: 16px; border-radius: 50%; background: #0a5fae; color: #fff; font-weight: 700; line-height: 16px; }

.ribbon { display: flex; height: 92px; background: #f5f6f7; border-bottom: 1px solid #dadbdc; }
.group { display: flex; flex-direction: column; position: relative; border-right: 1px solid #e2e3e4; margin-top: 3px; }
.tools-row { flex: 1; display: flex; }
.gname { height: 16px; margin-bottom: 1px; text-align: center; color: #4a4a4a; }
.g-clip { width: 263px; }
.g-org { width: 165px; }
.g-new { width: 84px; }
.g-open { width: 132px; }
.g-sel { width: 115px; }
.big { display: flex; flex-direction: column; align-items: center; padding-top: 5px; line-height: 13px; gap: 3px; }
.w-pin { width: 78px; } .w-copy { width: 32px; } .w-paste { width: 50px; } .w-new { width: 50px; } .w-prop { width: 62px; }
.dim { color: #85888c; }
.stack { display: flex; flex-direction: column; padding-top: 1px; }
.small { display: flex; align-items: center; gap: 3px; height: 22px; }
.caret { border: 3px solid transparent; border-top-color: #222; border-bottom-width: 0; }
.tight { margin-left: -2px; }
.g-sel .stack { padding-left: 7px; }
.loose { padding-top: 5px; }
.loose .small { height: 29px; }
.first { width: 86px; padding-left: 8px; border-right: 1px solid #e2e3e4; margin-bottom: 4px; }
.second { padding-left: 6px; }

.address { display: flex; height: 29px; padding-top: 6px; }
.arrows { width: 106px; display: flex; align-items: center; padding-left: 13px; gap: 17px; }
.arrows svg { fill: none; stroke-width: 1.600; }
.arrows .i6 { margin: 0 -4px 0 -3px; }
.off { stroke: #c9c9c9; } .up { stroke: #555; }
.crumbs { flex: 1; height: 22px; display: flex; align-items: center; border: 1px solid #d9d9d9; padding: 0 3px 0 2px; gap: 5px; color: #555; }
.crumb { flex: 1; margin-left: 3px; color: #111; }
.refresh { width: 17px; height: 22px; display: grid; place-items: center; border: 1px solid #d9d9d9; border-left: 0; }
.search { width: 202px; height: 22px; margin: 0 12px 0 13px; display: flex; align-items: center; border: 1px solid #d9d9d9; padding: 0 7px 0 8px; }
.search input { flex: 1; }
.search input::placeholder { color: #6d6d6d; opacity: 1; }

.panes { display: flex; padding-top: 6px; }
.tree { width: 139px; overflow: hidden; }
.tree li { height: 24px; display: flex; align-items: center; gap: 5px; padding-left: 32px; white-space: nowrap; }
.tree .deep { padding-left: 40px; }
.tree .current { background: #d9d9d9; }
.vscroll { width: 16px; background: #f0f0f0; display: flex; flex-direction: column; align-items: center; justify-content: space-between; padding: 4px 0; color: #555; margin-left: 1px; }
.vthumb { width: 15px; height: 104px; background: #cdcdcd; margin-top: 168px; }
.listing { flex: 1; }
table { width: 602px; margin-left: 18px; table-layout: fixed; border-spacing: 0; }
.c-name { width: 256px; } .c-date { width: 145px; } .c-type { width: 120px; }
th { height: 31px; padding: 0 7px 6px; vertical-align: middle; text-align: left; font-weight: 400; color: #4c607a; background: linear-gradient(#e5e5e5, #e5e5e5) right top / 1px 26px no-repeat; }
th:first-child { padding-left: 3px; }
td { height: 21px; padding: 0 7px; color: #6d6d6d; white-space: nowrap; }
td:first-child { padding-left: 6px; color: #111; }
td:last-child { text-align: right; padding-right: 4px; border-right: 4px solid #fff; }
.fname { display: flex; align-items: center; gap: 2px; }
.tail { text-align: right; padding-right: 40px; }
.long { padding-right: 33px; }
.selected td { background: #d9d9d9; }
.hscroll { height: 16px; margin: 3px 0 0 5px; display: flex; align-items: center; gap: 4px; padding: 0 3px; background: #f0f0f0; color: #555; }
.hthumb { flex: 1; height: 15px; background: #cdcdcd; }
.status { height: 24px; display: flex; align-items: center; padding: 0 4px 0 14px; color: #1e395b; }
.count { width: 65px; }
.bytes { margin: 0 auto 0 6px; }
.view { width: 22px; height: 22px; display: grid; place-items: center; }
.view svg { width: 16px; height: 14px; }
.view.on { background: #cce8f8; border: 1px solid #5ca9d6; }

.login { position: absolute; left: 470px; top: 161px; width: 340px; background: #fff; border-top: 1px solid #888; box-shadow: 0 1px 8px rgba(0, 0, 0, .65); }
.login-bar { height: 25px; display: flex; align-items: center; justify-content: space-between; padding-left: 4px; }
.login-bar .winbtns button { height: 25px; }
.faint { opacity: .3; }
.login-body { display: flex; height: 328px; background: linear-gradient(#0f5580, #0e4c73 50%, #0b3d5e); }
.form { flex: 1; display: flex; flex-direction: column; align-items: center; padding-top: 60px; }
.form h2 { font: 700 43px/42px "DejaVu Sans", sans-serif; color: #0b4166; text-shadow: 0 1px 1px #1a6490; margin-bottom: 8px; }
.form input { width: 155px; height: 23px; margin-bottom: 7px; background: #0d446a; border: 1px solid #0a3654; border-bottom-color: #1f709f; }
.go { width: 94px; height: 21px; align-self: center; background: #0d4166; border: 1px solid #0a3654; border-bottom-color: #1a6490; }
.credits { margin-top: 76px; text-align: center; font: 700 10px/20px "DejaVu Sans", sans-serif; color: #2170a0; text-shadow: 1px 1px 1px #062840; }
.brand { width: 40px; display: flex; flex-direction: column; align-items: center; padding-top: 16px; border-left: 1px solid #206b96; box-shadow: inset 4px 0 1px #0a344f; background: linear-gradient(#0e4364, #082f4a); font: 700 29px/21px "DejaVu Sans", sans-serif; color: #0f4d75; -webkit-text-stroke: 1px #2b7eab; text-shadow: 2px 2px 2px #04202f; }

.msg { position: absolute; left: 584px; top: 302px; width: 117px; background: #fff; box-shadow: 0 0 1px #333; display: flex; flex-direction: column; color: #000; }
.msg-close { align-self: flex-end; margin: 6px 9px 0; }
.msg p { padding: 29px 11px 21px; }
.msg-foot { height: 42px; display: flex; justify-content: flex-end; align-items: center; padding-right: 16px; background: #f0f0f0; }
.msg-foot button { width: 73px; height: 21px; line-height: 16px; border: 2px solid #0078d7; background: #e1e1e1; }

.taskbar { height: 40px; display: flex; background: linear-gradient(90deg, #001622, #00121f 40%, #000918 80%, #030817); color: #fff; }
.tb { width: 49px; display: grid; place-items: center; }
.tb:first-child { width: 48px; }
.tb.task { width: 50px; }
.app { box-shadow: inset 0 -3px #76b9ed; }
.app:not(.active) { width: 41px; margin: 0 4px; }
.active { background: #33444f; }
.tb-search { width: 288px; display: flex; align-items: center; gap: 11px; padding-left: 12px; background: #f2f2f2; border: 1px solid #cfcfcf; }
.tb-search input { flex: 1; font: 14px "Open Sans", sans-serif; }
.tb-search input::placeholder { color: #333; opacity: 1; }
.tray { margin-left: auto; display: flex; align-items: center; gap: 8px; }
.tray svg { fill: none; stroke: #fff; stroke-width: 1.200; }
.clock { width: 72px; display: flex; flex-direction: column; align-items: center; line-height: 18px; padding-top: 2px; }
.note { width: 32px; }
.peek { width: 5px; margin-left: 12px; border-left: 1px solid #6b737d; }
</style>
